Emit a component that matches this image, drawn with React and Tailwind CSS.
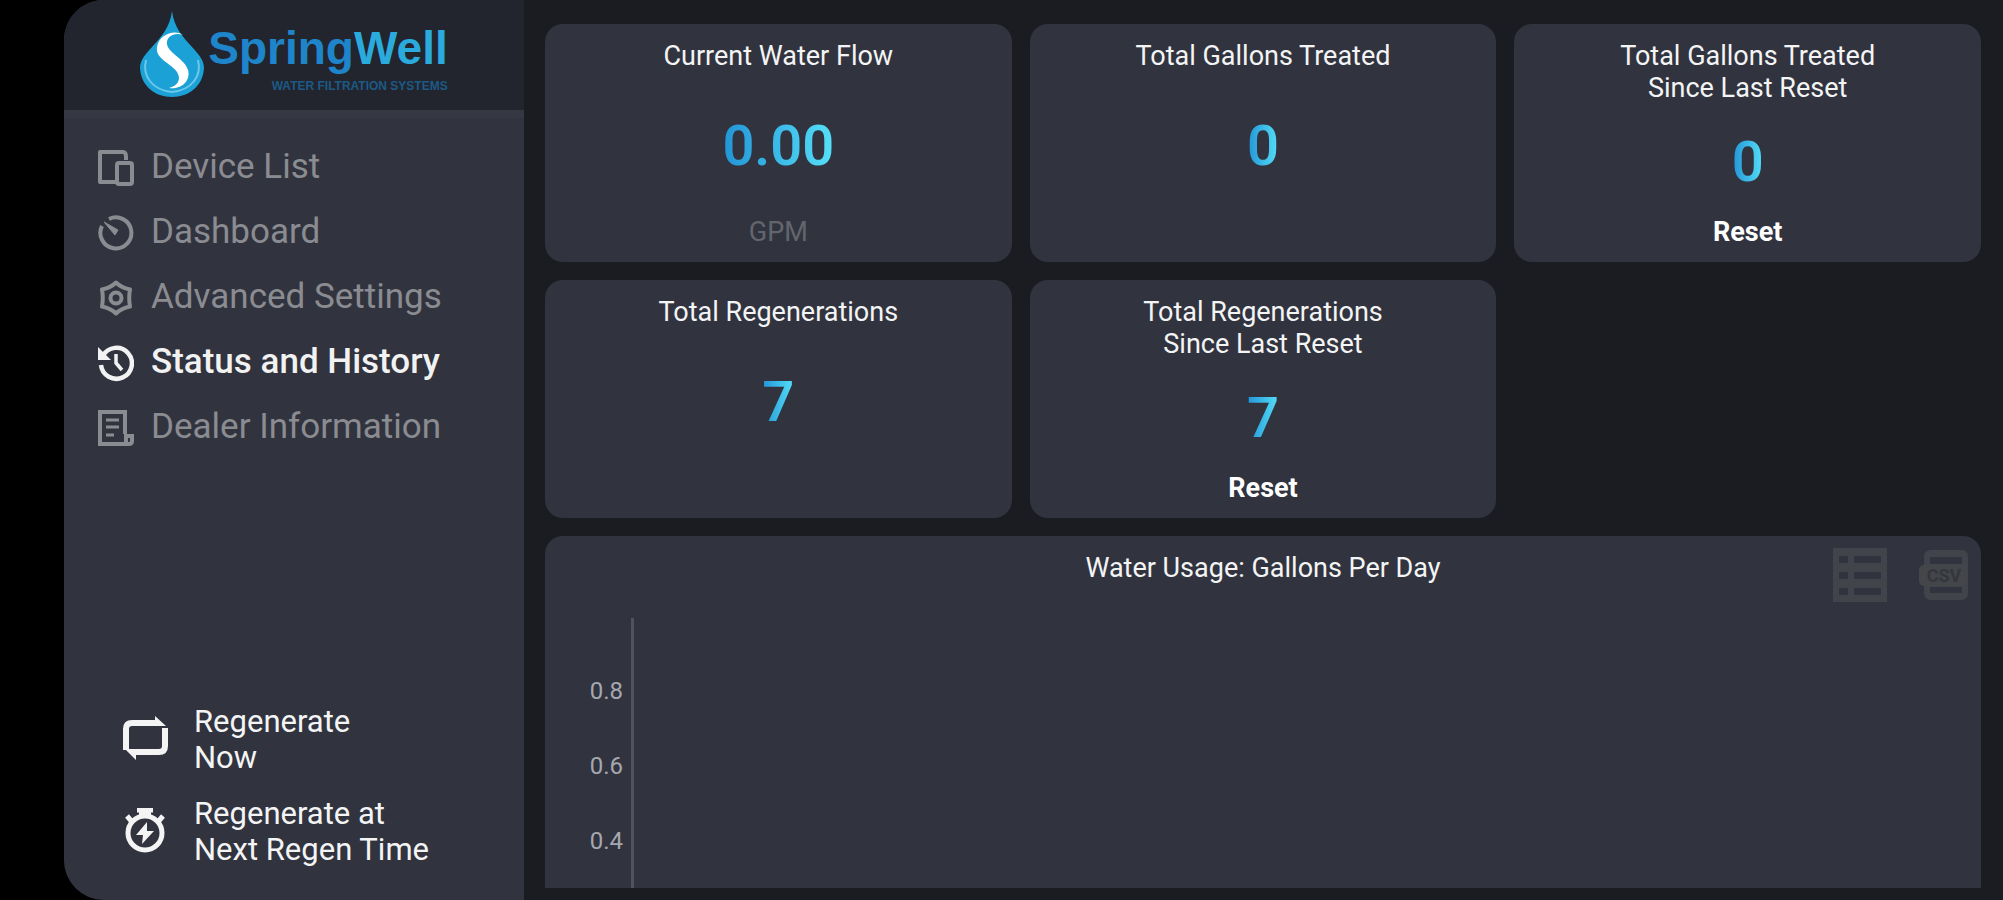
import React from "react";
import clsx from "clsx";

const DeviceIcon = () => (
  <svg viewBox="0 0 36 38" className="w-9 h-[38px]" fill="none" stroke="currentColor" strokeWidth="4">
    <path d="M18 33H2V3H25Q28 3 28 8V11" strokeLinejoin="round" />
    <rect x="19" y="14" width="15" height="21" rx="2" />
  </svg>
);

const DashboardIcon = () => (
  <svg viewBox="0 0 36 36" className="w-9 h-9" fill="none" stroke="currentColor" strokeWidth="4">
    <path d="M11 4A15.5 15.5 0 1 1 4 11" />
    <path d="M6 7L20 15L17 20Z" fill="currentColor" strokeWidth="1" strokeLinejoin="round" />
  </svg>
);

const SettingsIcon = () => (
  <svg viewBox="0 0 36 36" className="w-9 h-9" fill="none" stroke="currentColor" strokeWidth="4">
    <path d="M18 2.5C21 5.5 26 8.2 32 9.5C31 15 31 21 32 26.5C26 27.8 21 30.5 18 33.5C15 30.5 10 27.8 4 26.5C5 21 5 15 4 9.5C10 8.2 15 5.5 18 2.5Z" strokeLinejoin="round" />
    <circle cx="18" cy="18" r="5.5" />
  </svg>
);

const HistoryIcon = () => (
  <svg viewBox="0 0 36 38" className="w-9 h-[38px]" fill="none" stroke="currentColor" strokeWidth="4.5">
    <path d="M5 11.5A15.5 15.5 0 1 1 3 21" />
    <path d="M0 3V16H13Z" fill="currentColor" stroke="none" />
    <path d="M18 10V19L24 26" strokeWidth="3.5" />
  </svg>
);

const DealerIcon = () => (
  <svg viewBox="0 0 36 36" className="w-9 h-9" fill="none" stroke="currentColor" strokeWidth="4">
    <path d="M27 24V2H2V34H31Q34 34 34 31V26H28V33" />
    <path d="M8 10H21M8 17H21M8 25H16" strokeWidth="3" />
  </svg>
);

const RegenIcon = () => (
  <svg viewBox="0 0 48 48" className="w-12 h-12" fill="none" stroke="currentColor" strokeWidth="6">
    <path d="M5 34V13Q5 7 11 7H36" />
    <path d="M44 12V30Q44 36 38 36H13" />
    <path d="M34 0L45 10H34Z M15 44L4 33H15Z" fill="currentColor" stroke="none" />
  </svg>
);

const TimerIcon = () => (
  <svg viewBox="0 0 48 48" className="w-12 h-12" fill="none" stroke="currentColor" strokeWidth="5">
    <circle cx="24" cy="25" r="17" />
    <path d="M16 2H32M24 2V8" />
    <path d="M18 3H30V9H18Z" fill="currentColor" stroke="none" />
    <path d="M6 8L12 15M42 8L36 15" />
    <path d="M26 14L15 27H22L21 36L33 23H26Z" fill="currentColor" stroke="none" />
  </svg>
);

const TableIcon = () => (
  <svg viewBox="0 0 54 54" className="w-[54px] h-[54px]">
    <path
      fill="currentColor"
      fillRule="evenodd"
      d="M0 0H54V54H0Z M6 8V15H15V8Z M21 8V15H48V8Z M6 24V31H15V24Z M21 24V31H48V24Z M6 40V47H15V40Z M21 40V47H48V40Z"
    />
  </svg>
);

const CsvIcon = () => (
  <svg viewBox="0 0 50 50" className="w-[50px] h-[50px]">
    <path
      fill="currentColor"
      fillRule="evenodd"
      d="M12 0H42Q49 0 49 7V43Q49 50 42 50H12Q5 50 5 43V7Q5 0 12 0Z M11 7V14H43V7Z M11 37V43H43V37Z"
    />
    <rect x="0" y="15" width="48" height="21" rx="5" fill="#44464a" />
    <text x="25" y="32" textAnchor="middle" fontSize="18" fontWeight="700" fill="#34363e">
      CSV
    </text>
  </svg>
);

const DropLogo = () => (
  <svg viewBox="0 0 64 88" className="w-16 h-[88px]">
    <path d="M32 1C34 17 42 26 52 37C59 45 64 50 64 58C63 76 49 87 32 87C15 87 1 76 0 58C0 50 5 45 12 37C22 26 30 17 32 1Z" fill="#1ba1d5" />
    <path d="M6 50C2 66 12 80 32 82C52 80 62 66 58 50" fill="none" stroke="#6cc8ea" strokeWidth="2" />
    <path d="M43 25C35 19 19 24 17 37C15 49 31 53 37 62C42 70 37 76 29 78C42 80 51 70 48 60C45 49 28 43 27 34C26 27 34 22 43 25Z" fill="#fff" />
  </svg>
);

const menu = [
  { label: "Device List", icon: DeviceIcon },
  { label: "Dashboard", icon: DashboardIcon },
  { label: "Advanced Settings", icon: SettingsIcon },
  { label: "Status and History", icon: HistoryIcon, active: true },
  { label: "Dealer Information", icon: DealerIcon },
];

const actions = [
  { lines: ["Regenerate", "Now"], icon: RegenIcon },
  { lines: ["Regenerate at", "Next Regen Time"], icon: TimerIcon },
];

const stats = [
  { title: ["Current Water Flow"], value: "0.00", unit: "GPM" },
  { title: ["Total Gallons Treated"], value: "0" },
  { title: ["Total Gallons Treated", "Since Last Reset"], value: "0", reset: true },
  { title: ["Total Regenerations"], value: "7" },
  { title: ["Total Regenerations", "Since Last Reset"], value: "7", reset: true },
];

const Sidebar = () => (
  <aside className="w-[460px] shrink-0 flex flex-col bg-[#31343f] rounded-l-[40px] overflow-hidden">
    <div className="h-[118px] shrink-0 flex justify-center items-start gap-1 pt-[10px] bg-[#22252e] border-b-8 border-[#353842]">
      <DropLogo />
      <div className="flex flex-col items-end pt-3 font-['Liberation_Sans',Arial,sans-serif] font-bold">
        <div className="text-[46px] leading-[52px]">
          <span className="text-[#1f85cb]">Spring</span>
          <span className="text-[#2aaadd]">Well</span>
        </div>
        <div className="text-[12px] leading-[24px] text-[#1c5a86]">WATER FILTRATION SYSTEMS</div>
      </div>
    </div>
    <nav className="flex flex-col pt-[17px] pl-[34px]">
      {menu.map(({ label, icon: Icon, active }) => (
        <a
          key={label}
          href="#"
          className={clsx(
            "h-[65px] flex items-center gap-[17px] text-[35px] whitespace-nowrap",
            active ? "text-[#f2f2f3] font-medium" : "text-[#8b8c91]"
          )}
        >
          <Icon />
          {label}
        </a>
      ))}
    </nav>
    <div className="mt-auto flex flex-col gap-5 pl-[57px] pb-8">
      {actions.map(({ lines, icon: Icon }) => (
        <button key={lines[0]} className="flex items-center gap-[25px] text-left text-[31px] leading-9 text-[#f4f4f5] cursor-pointer">
          <Icon />
          <span>
            {lines[0]}
            <br />
            {lines[1]}
          </span>
        </button>
      ))}
    </div>
  </aside>
);

const StatCard = ({ stat }) => (
  <section className="min-h-[238px] flex flex-col items-center pt-4 pb-[14px] rounded-[18px] bg-[#31343f] text-[27px] leading-8 text-center">
    <h2 className="text-[#f4f4f5]">
      {stat.title.map((line) => (
        <span key={line} className="block">
          {line}
        </span>
      ))}
    </h2>
    <div className="flex-1 flex items-center pt-1">
      <span className="text-[56px] leading-[56px] font-semibold text-transparent bg-clip-text bg-linear-to-r from-[#2294d6] to-[#56e0f8]">
        {stat.value}
      </span>
    </div>
    <div className="h-8">
      {stat.unit && <span className="text-[#63656d]">{stat.unit}</span>}
      {stat.reset && <button className="font-bold text-white cursor-pointer">Reset</button>}
    </div>
  </section>
);

const UsageChart = () => (
  <section className="flex-1 flex flex-col rounded-t-[18px] bg-[#31343f]">
    <header className="grid grid-cols-[1fr_auto_1fr] items-start pt-3">
      <h2 className="col-start-2 pt-1 text-[27px] leading-8 text-[#f4f4f5]">
        Water Usage: Gallons Per Day
      </h2>
      <div className="flex justify-end gap-8 pr-3 text-[#41444b]">
        <button aria-label="Show as table" className="cursor-pointer">
          <TableIcon />
        </button>
        <button aria-label="Export CSV" className="cursor-pointer">
          <CsvIcon />
        </button>
      </div>
    </header>
    <div className="flex-1 flex mt-4">
      <div className="w-[89px] pr-2 pt-9 flex flex-col border-r-[3px] border-[#50525d] text-right text-[24px] leading-[75px] text-[#a6a8b0]">
        <span>0.8</span>
        <span>0.6</span>
        <span>0.4</span>
      </div>
    </div>
  </section>
);

const App = () => (
  <div className="min-h-screen flex pl-16 bg-black font-[Roboto,sans-serif]">
    <div className="flex-1 flex bg-[#1a1c21] rounded-l-[40px]">
      <Sidebar />
      <main className="flex-1 flex flex-col gap-[18px] pt-6 pb-3 pl-[21px] pr-[22px]">
        <div className="grid grid-cols-3 gap-[18px]">
          {stats.map((stat) => (
            <StatCard key={stat.title.join(" ")} stat={stat} />
          ))}
        </div>
        <UsageChart />
      </main>
    </div>
  </div>
);

export default App;
